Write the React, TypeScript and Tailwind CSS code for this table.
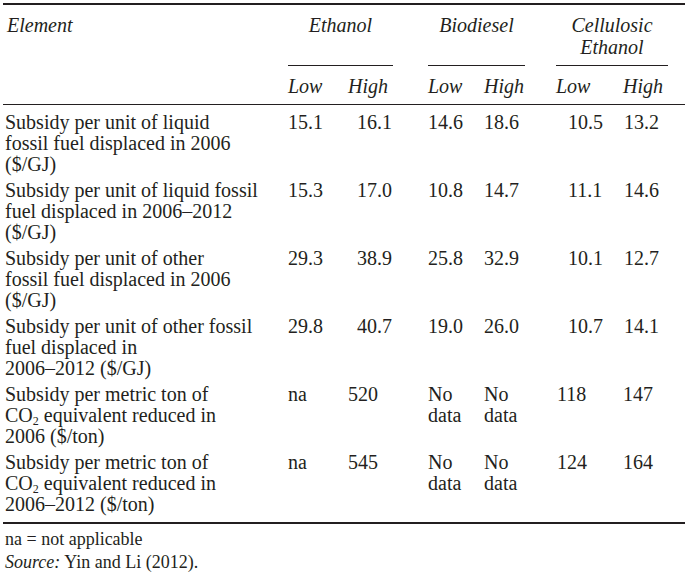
import type { ReactNode } from 'react';

/* ─── Layout ──────────────────────────────────────────────────────── */
const COLS = 'grid grid-cols-[285px_60px_45px_35px_56px_41px_31px_67px_45px_1fr]';
const INK = 'border-[#231f20]';

/* per data column: padding for decimal values / for whole values */
const DEC_PAD = ['pl-0', 'pl-[9px]', 'pl-0', 'pl-0', 'pl-[12px]', 'pl-[1px]'];
const INT_PAD = ['pl-0', 'pl-0', 'pl-0', 'pl-0', 'pl-[1px]', 'pl-0'];

const CO2 = (
  <>
    CO<span className="relative top-[3px] text-[12px] leading-none">2</span> equivalent reduced in
  </>
);

const NO_DATA = (
  <>
    No
    <br />
    data
  </>
);

type Row = { label: ReactNode[]; vals: ReactNode[]; dec: boolean[] };

const ROWS: Row[] = [
  {
    label: ['Subsidy per unit of liquid', 'fossil fuel displaced in 2006', '($/GJ)'],
    vals: ['15.1', '16.1', '14.6', '18.6', '10.5', '13.2'],
    dec: [true, true, true, true, true, true],
  },
  {
    label: ['Subsidy per unit of liquid fossil', 'fuel displaced in 2006–2012', '($/GJ)'],
    vals: ['15.3', '17.0', '10.8', '14.7', '11.1', '14.6'],
    dec: [true, true, true, true, true, true],
  },
  {
    label: ['Subsidy per unit of other', 'fossil fuel displaced in 2006', '($/GJ)'],
    vals: ['29.3', '38.9', '25.8', '32.9', '10.1', '12.7'],
    dec: [true, true, true, true, true, true],
  },
  {
    label: ['Subsidy per unit of other fossil', 'fuel displaced in', '2006–2012 ($/GJ)'],
    vals: ['29.8', '40.7', '19.0', '26.0', '10.7', '14.1'],
    dec: [true, true, true, true, true, true],
  },
  {
    label: ['Subsidy per metric ton of', CO2, '2006 ($/ton)'],
    vals: ['na', '520', NO_DATA, NO_DATA, '118', '147'],
    dec: [false, false, false, false, false, false],
  },
  {
    label: ['Subsidy per metric ton of', CO2, '2006–2012 ($/ton)'],
    vals: ['na', '545', NO_DATA, NO_DATA, '124', '164'],
    dec: [false, false, false, false, false, false],
  },
];

/* data column index -> grid column slot (skips the spacer columns) */
const SLOT = ['col-start-2', 'col-start-3', 'col-start-5', 'col-start-6', 'col-start-8', 'col-start-9'];

function GroupHead({ lines, start }: { lines: string[]; start: string }) {
  return (
    <div className={`${start} col-span-2 flex flex-col items-center pt-[9px] leading-[22px] italic border-b ${INK}`}>
      {lines.map(l => (
        <span key={l}>{l}</span>
      ))}
    </div>
  );
}

export default function App() {
  return (
    <div
      className="min-h-screen w-[690px] bg-white text-[#231f20] text-[20px]"
      style={{ fontFamily: '"Liberation Serif", "Times New Roman", serif' }}
    >
      <div className={`ml-[3px] mt-[3px] w-[682px] border-t-2 border-b-2 ${INK}`}>
        {/* ── Header ─────────────────────────────────────────── */}
        <div className={`${COLS} h-[61px]`}>
          <div className="col-start-1 pl-[4px] pt-[9px] leading-[22px] italic">Element</div>
          <GroupHead lines={['Ethanol']} start="col-start-2" />
          <GroupHead lines={['Biodiesel']} start="col-start-5" />
          <GroupHead lines={['Cellulosic', 'Ethanol']} start="col-start-8" />
        </div>
        <div className={`${COLS} h-[39px] pt-[10px] leading-[21px] italic border-b ${INK}`}>
          {['Low', 'High', 'Low', 'High', 'Low', 'High'].map((t, i) => (
            <div key={i} className={`${SLOT[i]} row-start-1`}>
              {t}
            </div>
          ))}
        </div>

        {/* ── Body ───────────────────────────────────────────── */}
        {ROWS.map((row, r) => (
          <div
            key={r}
            className={`${COLS} leading-[21px] ${r === 0 ? 'pt-[7px]' : 'pt-[5px]'} ${
              r === ROWS.length - 1 ? 'pb-[7px]' : ''
            }`}
          >
            <div className="col-start-1 row-start-1 pl-[2px] whitespace-nowrap">
              {row.label.map((l, i) => (
                <div key={i}>{l}</div>
              ))}
            </div>
            {row.vals.map((v, i) => (
              <div
                key={i}
                className={`${SLOT[i]} row-start-1 whitespace-nowrap ${row.dec[i] ? DEC_PAD[i] : INT_PAD[i]}`}
              >
                {v}
              </div>
            ))}
          </div>
        ))}
      </div>

      {/* ── Notes ──────────────────────────────────────────────── */}
      <div className="pl-[5px] text-[18px] leading-[20px]">
        <p className="mt-[5px]">na = not applicable</p>
        <p className="mt-[3px]">
          <span className="italic">Source:</span> Yin and Li (2012).
        </p>
      </div>
    </div>
  );
}
